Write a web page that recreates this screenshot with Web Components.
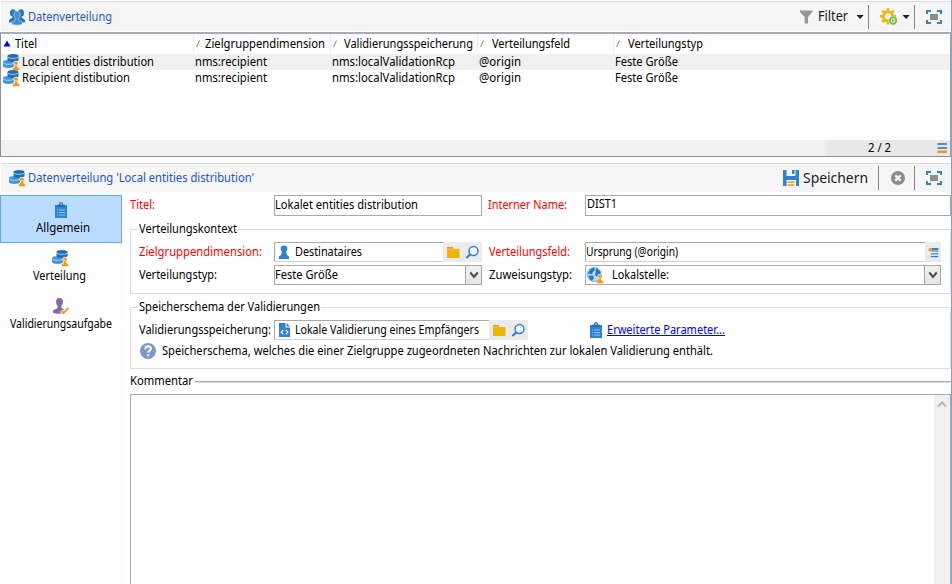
<!DOCTYPE html>
<html lang="de">
<head>
<meta charset="utf-8">
<title>Datenverteilung</title>
<style>
html,body{margin:0;padding:0}
body{width:952px;height:584px;overflow:hidden;background:#fff;font:12px/16px "Noto Sans","Open Sans",sans-serif;color:#000}
</style>
</head>
<body>
<distribution-app></distribution-app>
<script>
const cyl=(x,y,c)=>`<path fill="${c}" d="M${x} ${y+2}v4c0 2.600 11 2.600 11 0v-4z"/><ellipse cx="${x+5.5}" cy="${y+2}" rx="5.500" ry="2.100" fill="${c}"/><path d="M${x} ${y+2.4}c0 2.600 11 2.600 11 0" fill="none" stroke="#dcecf8" stroke-width=".7"/>`;
const pawn=`<circle cx="13" cy="9.400" r="2.600" fill="#fff" opacity=".8"/><circle cx="13" cy="9.400" r="2" fill="#f39a12"/><path fill="#f39a12" stroke="#fff" stroke-opacity=".7" stroke-width=".5" d="M12 10.500h2l.4 2.500 2 1.400V16.500h-6.800v-2.100l2-1.400z"/>`;
const full=`<path d="M1 5V2h4M11 2h4v3M15 11v3h-4M5 14H1v-3" fill="none" stroke="#2d83d3" stroke-width="2"/><path fill="#8c8c8c" d="M4 5h8v6H4z"/>`;
const ICONS={
 db:`${cyl(0,6,'#3f95dd')}${cyl(4.5,0,'#1c6fb5')}${pawn}`,
 people:`<g fill="#2c75b5"><ellipse cx="4" cy="4" rx="3" ry="3.800"/><ellipse cx="12" cy="4" rx="3" ry="3.800"/><path d="M3 6l1 2-4 3v2.500h16V11l-4-3 1-2z"/></g><path fill="#3e91d6" stroke="#f5f5f5" stroke-width=".5" d="M8 2c-2.700 0-3.500 2-3 4.300.2 1.300.7 2 1.300 2.700v2l-3.500 2v2.400q5.200 1.500 10.400 0V13l-3.500-2V9c.6-.7 1.100-1.400 1.300-2.700C11.500 4 10.700 2 8 2z"/>`,
 funnel:`<path fill="#969696" d="M2 1.500h12.500v1.500L10 8v6.500H6.700V8L2 3z"/>`,
 gear:`<g fill="none" stroke="#efb400"><circle cx="7" cy="7.300" r="4.600" stroke-width="2.600"/><path stroke-width="2.600" d="M7-.8v3M7 12.500v3M-1.200 7.300h3M1.300 1.600l2 2M12.700 1.600l-2 2M1.300 13l2-2M12.500 7.300h2.600"/></g><circle cx="12" cy="11.500" r="4.600" fill="#f5f5f5"/><circle cx="12" cy="11.500" r="3.200" fill="#fff" stroke="#78bd3b" stroke-width="2"/><path fill="#78bd3b" d="M11 9.600l2.800 1.900-2.800 1.900z"/>`,
 full,
 save:`<path fill="#2d83d3" d="M0 0h3.500v6h9V0H16v16h-3v-6H3.500v6H0z"/><path fill="#2d83d3" d="M9 0h2.500v4H9z"/><path fill="#f39a12" d="M4.500 11.500h7V13h-7zM4.500 14.200h7v1.500h-7z"/>`,
 close:`<circle cx="8" cy="8" r="7" fill="#8a8a8a"/><path d="M5.300 5.300l5.400 5.400M10.700 5.300l-5.400 5.400" stroke="#f5f5f5" stroke-width="2.400"/>`,
 clip:`<path fill="#2d83d3" d="M2 3h12v13H2z"/><path fill="#1c6fb5" d="M4.500 2.500h7V5h-7z"/><circle cx="8" cy="2" r="1.300" fill="#fff" stroke="#1c6fb5" stroke-width="1.200"/><path d="M4 8h1m1 0h6M4 10.500h1m1 0h6M4 13h1m1 0h6" stroke="#8fc4f2"/>`,
 task:`<path fill="#8467ad" d="M7.500 0C4.700 0 3.800 2 4.100 4.500c.2 1.500.7 2.500 1.400 3.300V10L1 12.500v2.300q4 1.200 8 .7l3-4-2.500-1.500V7.800c.7-.8 1.200-1.800 1.400-3.300C11.200 2 10.300 0 7.500 0z"/><path d="M9 12.800l2.500 2.200 5-5" fill="none" stroke="#fff" stroke-width="3"/><path d="M9 12.800l2.500 2.200 5-5" fill="none" stroke="#f39a12" stroke-width="1.800"/>`,
 user:`<path fill="#2d83d3" d="M8 1.500c-2.500 0-3.500 1.300-3.300 3.300.1 1.500.6 2.500 1.200 3.200L5 11l-2 1.500V15h10v-2.500L11 11l-.9-3c.6-.7 1.100-1.700 1.200-3.200.2-2-.8-3.300-3.300-3.300z"/>`,
 folder:`<path fill="#f0932b" d="M2 3h6v2H2z"/><path fill="#efb400" d="M2 5h12.500v9H2z"/><path d="M2 5h6" stroke="#fbe3a0" stroke-width=".6"/>`,
 lens:`<circle cx="9.500" cy="7" r="4.500" fill="#f8fbfe" stroke="#2d83d3" stroke-width="1.500"/><path d="M6.200 10.400L2.300 14" stroke="#2d83d3" stroke-width="2.200"/>`,
 globe:`<circle cx="7.200" cy="7.500" r="7" fill="#b9dbf5" stroke="#2d83d3" stroke-width=".6"/><path fill="#2479c5" d="M3 2.500L7 .6l1 2.400-2 2-1 2H3L.8 6.500zM1.500 8.500l4.500 0 1 2.500-2 2.800C3 13 1.500 10.500 1.500 8.500zM9 1l4 3 1 4-3.500 2-2.500-2 .5-3z"/>${pawn}`,
 list:`<path fill="#2d83d3" d="M5.500 1.500H15v5H5.500zM4 9h11v2H4zM4 13h11v2H4z"/><path d="M7 5h7M4 11.500h11" stroke="#a9d1f4"/><path fill="#f39a12" d="M0 4l2.500-2.500h2.500l1.500 2.500L5 6.500H2.500z"/>`,
 xml:`<path fill="#2d83d3" d="M3 1h6.500v4.500H14V15H3z"/><path fill="#2d83d3" d="M10.500 1L14 4.500h-3.500z"/><path d="M7.300 8L5.200 10.200l2.100 2.200M9.800 8l2.100 2.200-2.100 2.200" fill="none" stroke="#fff" stroke-width="1.200"/>`,
 help:`<circle cx="8" cy="8" r="8" fill="#7b99c8"/><path d="M5.300 6.200c0-3.800 5.600-3.700 5.600-.6 0 2-2.700 2-2.700 4.200M8.200 11.200v2" fill="none" stroke="#fff" stroke-width="2"/>`,
 chev:`<path d="M4.300 5.500L8 10l3.700-4.500" fill="none" stroke="#484848" stroke-width="2"/>`,
 up:`<path d="M4 10.500l4-4 4 4" fill="none" stroke="#b6b6b6" stroke-width="2"/>`,
 caret:`<path fill="#222" d="M4.500 6h7.200L8.100 10z"/>`,
 sort:`<path fill="#0000f0" d="M8 4.500l3.500 6h-7z"/>`,
 slash:`<path d="M6.500 11l3-6.500" stroke="#858585" stroke-width="1"/>`,
 bars:`<path fill="#4a90d9" d="M3.500 3h9.500v2H3.500zM3.500 7h9.500v2H3.500z"/><path fill="#f39a12" d="M3.500 10.500h9.500v2.500H3.500z"/>`
};
const define=(name,html,extra)=>customElements.define(name,class extends HTMLElement{
  connectedCallback(){
    if(this.shadowRoot)return;
    const t=document.createElement('template');
    t.innerHTML=typeof html==='function'?html(this):html;
    this.attachShadow({mode:'open'}).append(t.content.cloneNode(true));
    if(extra)extra(this);
  }
});
/* Single-line label condensed or widened to fill the given width. */
define('ui-text',e=>`<style>:host{display:block;white-space:pre;flex:none;width:${e.getAttribute('w')}px}span{display:inline-block;transform-origin:0 50%;vertical-align:top}:host([link]) span{text-decoration:underline}</style><span>${e.textContent}</span>`,e=>{
  const s=e.shadowRoot.querySelector('span'),w=+e.getAttribute('w');
  s.style.transform='scaleX('+w/s.getBoundingClientRect().width+')';
});
define('ui-icon',e=>`<style>:host{display:block;flex:none;width:${e.getAttribute('size')||16}px;height:${e.getAttribute('size')||16}px}svg{display:block;width:100%;height:100%;overflow:visible}</style><svg viewBox="0 0 16 16">${ICONS[e.getAttribute('name')]}</svg>`);
define('ui-field',e=>{const n=e.getAttribute('kind');return `<style>
:host{display:flex;box-sizing:border-box;align-items:stretch;background:#fff}
.v{flex:1;display:flex;align-items:center;gap:3px;box-sizing:border-box;border:1px solid #a8a9b1;padding:0 0 1px ${e.hasAttribute('icon')?'1px':'0'};min-width:0}
.b{display:flex;align-items:center;justify-content:center;background:#ebebeb;gap:4px}
.pick{width:39px}.one{width:16px}.sel{width:17px;box-sizing:border-box;border:1px solid #a6a6a6;margin-left:-1px;background:linear-gradient(#f1f1f1,#e4e4e4)}
.pick ui-icon{margin-left:-1px}
.p .v{border-right:0;border-bottom-color:#cfcfd4}
.w{display:flex;flex:1}
</style><div class="w ${n==='pick'||n==='one'?'p':''}"><div class="v">${e.hasAttribute('icon')?`<ui-icon name="${e.getAttribute('icon')}"></ui-icon>`:''}<slot></slot></div>${n==='pick'?'<div class="b pick"><ui-icon name="folder"></ui-icon><ui-icon name="lens"></ui-icon></div>':n==='one'?'<div class="b one"><ui-icon size="11" name="list"></ui-icon></div>':n==='sel'?'<div class="b sel"><ui-icon name="chev"></ui-icon></div>':''}</div>`});
define('ui-group',`<style>:host{display:block}fieldset{box-sizing:border-box;height:100%;margin:0;padding:0;border:1px solid #dcdcdc;min-width:0}legend{margin-left:7px;padding:0 1px;height:16px}</style><fieldset><legend><slot name="legend"></slot></legend><slot></slot></fieldset>`);
define('title-bar',`<style>:host{display:flex;align-items:center;box-sizing:border-box;background:#f5f5f5;border-top:1px solid #dcdcdc;padding-left:8px;margin-left:1px;color:#2456c8}.r{margin-left:auto;display:flex;align-items:center;height:100%;color:#1a1a1a}.l{display:flex;align-items:center;gap:3px}</style><div class="l"><slot></slot></div><div class="r"><slot name="tools"></slot></div>`);
define('tool-sep',`<style>:host{display:block;width:1px;height:24px;background:#858585;flex:none}</style>`);
define('data-list',`<style>
:host{display:flex;flex-direction:column;box-sizing:border-box;width:951px;height:125px;border:1px solid #8e929c;border-top:2px solid #a9acb8;border-right-color:#9aa1ae}
.g{display:grid;grid-template-columns:192px 136.500px 147.500px 135.500px 1fr;align-items:center}
.h{height:20px;background:#fdfdfd}.h div{display:flex;align-items:center;box-sizing:border-box;height:20px;border-left:1px solid #eef2f8}
.h div:first-child{border:0}.row{height:16px}.s{background:#f0f0f0}
.row div{display:flex;align-items:center;padding-left:2px}.row .n{gap:3px;padding-left:2px}.f{display:flex;align-items:center;margin-top:auto;height:16px;background:#f0f0f0}
.c{display:flex;align-items:center;background:#e8e8e8;width:123px;height:16px;margin-left:auto;padding-left:41px;box-sizing:border-box;justify-content:space-between}
</style>
<div class="g h"><div><ui-icon style="margin-left:-2px" name="sort"></ui-icon><ui-text w="22">Titel</ui-text></div><div><ui-icon style="margin:0 -4px 0 -4px" name="slash"></ui-icon><ui-text style="margin-left:3px" w="120">Zielgruppendimension</ui-text></div><div><ui-icon style="margin:0 1px 0 -4px" name="slash"></ui-icon><ui-text w="129">Validierungsspeicherung</ui-text></div><div><ui-icon style="margin:0 2px 0 -4px" name="slash"></ui-icon><ui-text w="78">Verteilungsfeld</ui-text></div><div><ui-icon style="margin:0 2px 0 -4px" name="slash"></ui-icon><ui-text w="75">Verteilungstyp</ui-text></div></div>
<div class="g row s"><div class="n"><ui-icon name="db"></ui-icon><ui-text w="132">Local entities distribution</ui-text></div><div><ui-text w="72">nms:recipient</ui-text></div><div><ui-text w="123">nms:localValidationRcp</ui-text></div><div><ui-text w="42">@origin</ui-text></div><div><ui-text w="63">Feste Größe</ui-text></div></div>
<div class="g row"><div class="n"><ui-icon name="db"></ui-icon><ui-text w="108">Recipient distibution</ui-text></div><div><ui-text w="72">nms:recipient</ui-text></div><div><ui-text w="123">nms:localValidationRcp</ui-text></div><div><ui-text w="42">@origin</ui-text></div><div><ui-text w="63">Feste Größe</ui-text></div></div>
<div class="f"><div class="c"><ui-text w="23">2 / 2</ui-text><ui-icon name="bars"></ui-icon></div></div>`);
define('nav-item',e=>`<style>:host{display:flex;flex-direction:column;align-items:center;box-sizing:border-box;height:48px;padding:6px 3px 0 0;gap:2px;border:1px solid transparent}:host([active]){background:#b9dcff;border-color:#66a7e8;padding:6px 0 0}</style><ui-icon name="${e.getAttribute('icon')}"></ui-icon><slot></slot>`);
define('side-nav',`<style>:host{display:flex;flex-direction:column;width:122px;background:#fdfdfd;flex:none}</style><slot></slot>`);
define('detail-form',`<style>
:host{display:flex;flex-direction:column;width:821px;margin-left:8px;box-sizing:border-box}
.top{display:grid;grid-template-columns:144px 208px 103px 366px;height:26px;align-items:start}
.red{color:#f00}.top ui-field{height:21px}.top ui-text{margin-top:2px}.top ui-field ui-text{margin-top:0}
.row{display:grid;grid-template-columns:135px 208px 103px 356px;margin-left:8px;align-items:center;height:20px}
.row ui-field{height:20px}.row>:nth-child(3){margin-left:7px}
.x{display:flex;align-items:center;margin-left:8px}
.k{display:flex;align-items:center;gap:2px;height:16px}.k i{flex:1;border-top:1px solid #aaa;border-bottom:1px solid #ddd;box-sizing:border-box;height:2px;margin-top:2px}
.ta{display:flex;justify-content:flex-end;flex:1;border:1px solid #a8a9b1;border-bottom:0;margin-top:5px;background:#fff}.sb{width:16px;background:#f0f0f0;padding-top:1px}
a{color:#00f;display:block}
</style>
<div class="top"><ui-text class="red" w="25">Titel:</ui-text><ui-field><ui-text w="143">Lokalet entities distribution</ui-text></ui-field><ui-text class="red" style="margin-left:6px" w="79">Interner Name:</ui-text><ui-field><ui-text style="margin:-2px 0 0 1px" w="30">DIST1</ui-text></ui-field></div>
<ui-group style="height:73px"><ui-text slot="legend" w="98">Verteilungskontext</ui-text>
<div class="row" style="margin-top:5px"><ui-text class="red" w="123">Zielgruppendimension:</ui-text><ui-field kind="pick" icon="user"><ui-text w="67">Destinataires</ui-text></ui-field><ui-text class="red" w="81">Verteilungsfeld:</ui-text><ui-field kind="one"><ui-text w="92">Ursprung (@origin)</ui-text></ui-field></div>
<div class="row" style="margin-top:3px"><ui-text w="78">Verteilungstyp:</ui-text><ui-field kind="sel"><ui-text w="63">Feste Größe</ui-text></ui-field><ui-text w="83">Zuweisungstyp:</ui-text><ui-field kind="sel" icon="globe"><ui-text style="margin-left:6px" w="57">Lokalstelle:</ui-text></ui-field></div></ui-group>
<ui-group style="height:70px;margin-top:5px"><ui-text slot="legend" w="181">Speicherschema der Validierungen</ui-text>
<div class="x" style="margin-top:5px;height:20px"><ui-text w="132">Validierungsspeicherung:</ui-text><ui-field style="width:254px;height:20px;margin-left:3px" kind="pick" icon="xml"><ui-text w="184">Lokale Validierung eines Empfängers</ui-text></ui-field><ui-icon style="margin:0 3px 0 60px" name="clip"></ui-icon><a><ui-text link w="118">Erweiterte Parameter...</ui-text></a></div>
<div class="x" style="margin-top:3px;gap:6px"><ui-icon style="margin-left:1px" name="help"></ui-icon><ui-text w="551">Speicherschema, welches die einer Zielgruppe zugeordneten Nachrichten zur lokalen Validierung enthält.</ui-text></div></ui-group>
<div class="k" style="margin-top:4px"><ui-text w="63">Kommentar</ui-text><i></i></div>
<div class="ta"><div class="sb"><ui-icon name="up"></ui-icon></div></div>`);
define('distribution-app',`<style>
:host{display:flex;flex-direction:column;width:952px;height:584px;box-sizing:border-box;border-right:1px solid #7fa6cf;padding-top:1px}
.main{display:flex;flex:1;margin-top:3px;min-height:0}
</style>
<title-bar style="height:30px"><ui-icon name="people"></ui-icon><ui-text w="84">Datenverteilung</ui-text>
<ui-icon slot="tools" name="funnel"></ui-icon><ui-text slot="tools" style="font-size:14px;margin:-1px 4px 0 4px" w="30">Filter</ui-text><ui-icon slot="tools" name="caret"></ui-icon><tool-sep slot="tools"></tool-sep><ui-icon slot="tools" style="margin:0 0 0 12px" name="gear"></ui-icon><ui-icon slot="tools" style="margin-left:1px" name="caret"></ui-icon><tool-sep slot="tools"></tool-sep><ui-icon slot="tools" style="margin:0 9px 0 11px" name="full"></ui-icon></title-bar>
<data-list style="margin-top:1px"></data-list>
<title-bar style="height:29px;margin-top:6px"><ui-icon name="db"></ui-icon><ui-text w="226">Datenverteilung 'Local entities distribution'</ui-text>
<ui-icon slot="tools" name="save"></ui-icon><ui-text slot="tools" style="font-size:15px;margin:-2px 10px 0 4px" w="65">Speichern</ui-text><tool-sep slot="tools"></tool-sep><ui-icon slot="tools" style="margin:0 8px 0 11px" name="close"></ui-icon><tool-sep slot="tools"></tool-sep><ui-icon slot="tools" style="margin:0 9px 0 11px" name="full"></ui-icon></title-bar>
<div class="main"><side-nav><nav-item active icon="clip"><ui-text style="margin-left:3px" w="54">Allgemein</ui-text></nav-item><nav-item icon="db"><ui-text w="53">Verteilung</ui-text></nav-item><nav-item icon="task"><ui-text style="margin-left:2px" w="102">Validierungsaufgabe</ui-text></nav-item></side-nav><detail-form></detail-form></div>`);
</script>
</body>
</html>
